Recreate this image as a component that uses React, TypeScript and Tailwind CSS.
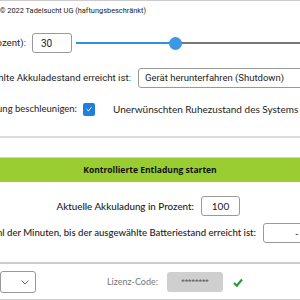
import React from "react";

export default function App() {
  const f = { fontFamily: 'Roboto, "Open Sans", sans-serif' };
  const lato = { fontFamily: 'Lato, "Open Sans", sans-serif' };
  const os = { fontFamily: '"Open Sans", "Noto Sans", sans-serif' };
  return (
    <div className="w-[300px] h-[300px] overflow-hidden bg-white text-[#222]" style={f}>
      {/* copyright */}
      <div className="h-[20px] flex items-center border-t border-[#ccc]">
        <div className="w-[146px] flex justify-end whitespace-nowrap text-[7.4px] text-[#222]">
          <span className="text-[#1a73e8]">Copyright:</span>&nbsp;© 2022 Tadelsucht UG (haftungsbeschränkt)
        </div>
      </div>
      {/* percent row */}
      <div className="mt-[13px] h-[20px] flex items-center">
        <div className="w-[26px] flex justify-end whitespace-nowrap text-[9.7px]">Ziel-Akkuladestand (in Prozent):</div>
        <div className="ml-[6px] w-[40px] h-[20px] border border-[#999] rounded-[3px] flex items-center pl-[8px] text-[10px]">30</div>
        <div className="ml-[4px] flex-1 flex items-center h-[14px]">
          <div className="w-[99px] h-[2px] bg-[#2f8fe6]" />
          <div className="w-[13px] h-[13px] rounded-full bg-[#3d97e6] -ml-[6px] -mr-[6px] z-10 shrink-0" />
          <div className="flex-1 h-[2px] bg-[#777]" />
        </div>
      </div>
      {/* action row */}
      <div className="mt-[15px] h-[20px] flex items-center">
        <div className="w-[131px] flex justify-end whitespace-nowrap text-[9.7px]">Aktion, wenn der ausgewählte Akkuladestand erreicht ist:</div>
        <div className="ml-[7px] w-[200px] shrink-0 h-[20px] border border-[#999] rounded-[3px] flex items-center pl-[6px] whitespace-nowrap text-[9.5px]">Gerät herunterfahren (Shutdown)</div>
      </div>
      {/* accelerate row */}
      <div className="mt-[14px] h-[14px] flex items-center">
        <div className="w-[77px] flex justify-end whitespace-nowrap text-[9.5px]" style={lato}>Entladung beschleunigen:</div>
        <div className="ml-[6px] w-[12px] h-[13px] rounded-[2px] bg-[#1e7fe0] flex items-center justify-center shrink-0">
          <svg width="8" height="8" viewBox="0 0 10 10" fill="none">
            <path d="M2 5.2 L4.2 7.4 L8.2 2.8" stroke="white" strokeWidth="1.2" />
          </svg>
        </div>
        <div className="ml-[18px] whitespace-nowrap text-[10px]" style={lato}>Unerwünschten Ruhezustand des Systems verhindern</div>
      </div>
      {/* separator */}
      <div className="mt-[20px] h-[2px] bg-[#ddd]" />
      {/* green button */}
      <div className="mt-[19px] h-[25px] bg-[#9acd32] border-t border-[#c9e596] flex items-center justify-center text-[8.5px] font-bold text-[#111]" style={os}>
        Kontrollierte Entladung starten
      </div>
      {/* current charge */}
      <div className="mt-[14px] h-[20px] flex items-center" style={lato}>
        <div className="w-[194px] shrink-0 flex justify-end whitespace-nowrap text-[9.8px] font-medium">Aktuelle Akkuladung in Prozent:</div>
        <div className="ml-[7px] w-[39px] h-[20px] border border-[#999] rounded-[3px] flex items-center justify-center text-[10px]">100</div>
      </div>
      {/* minutes */}
      <div className="mt-[7px] h-[20px] flex items-center" style={lato}>
        <div className="w-[256px] flex justify-end whitespace-nowrap text-[9.6px] font-medium">Geschätzte Anzahl der Minuten, bis der ausgewählte Batteriestand erreicht ist:</div>
        <div className="ml-[7px] w-[70px] shrink-0 h-[20px] border border-[#999] rounded-[3px] flex items-center pl-[31px] text-[10px]">-</div>
      </div>
      {/* separator */}
      <div className="mt-[19px] h-[2px] bg-[#ccc]" />
      {/* footer */}
      <div className="mt-[7px] h-[22px] flex items-center">
        <div className="w-[36px] h-[22px] border border-[#999] rounded-[3px] flex items-center justify-end pr-[6px] shrink-0">
          <svg width="8" height="5" viewBox="0 0 8 5" fill="none">
            <path d="M0.5 0.5 L4 4 L7.5 0.5" stroke="#666" strokeWidth="1" />
          </svg>
        </div>
        <div className="ml-[71px] w-[48px] shrink-0 whitespace-nowrap text-[9px] text-[#777]" style={lato}>Lizenz-Code:</div>
        <div className="ml-[12px] w-[56px] h-[20px] rounded-[3px] bg-[#cfcfcf] flex items-center justify-center text-[8px] text-[#555] shrink-0">********</div>
        <svg className="ml-[10px]" width="10" height="9" viewBox="0 0 10 9">
          <path d="M1 5 L3.8 7.8 L9 1.5" stroke="#2e9a3a" strokeWidth="2.2" fill="none" />
        </svg>
      </div>
      <div className="mt-[6px] h-[1px] bg-[#ccc]" />
    </div>
  );
}
